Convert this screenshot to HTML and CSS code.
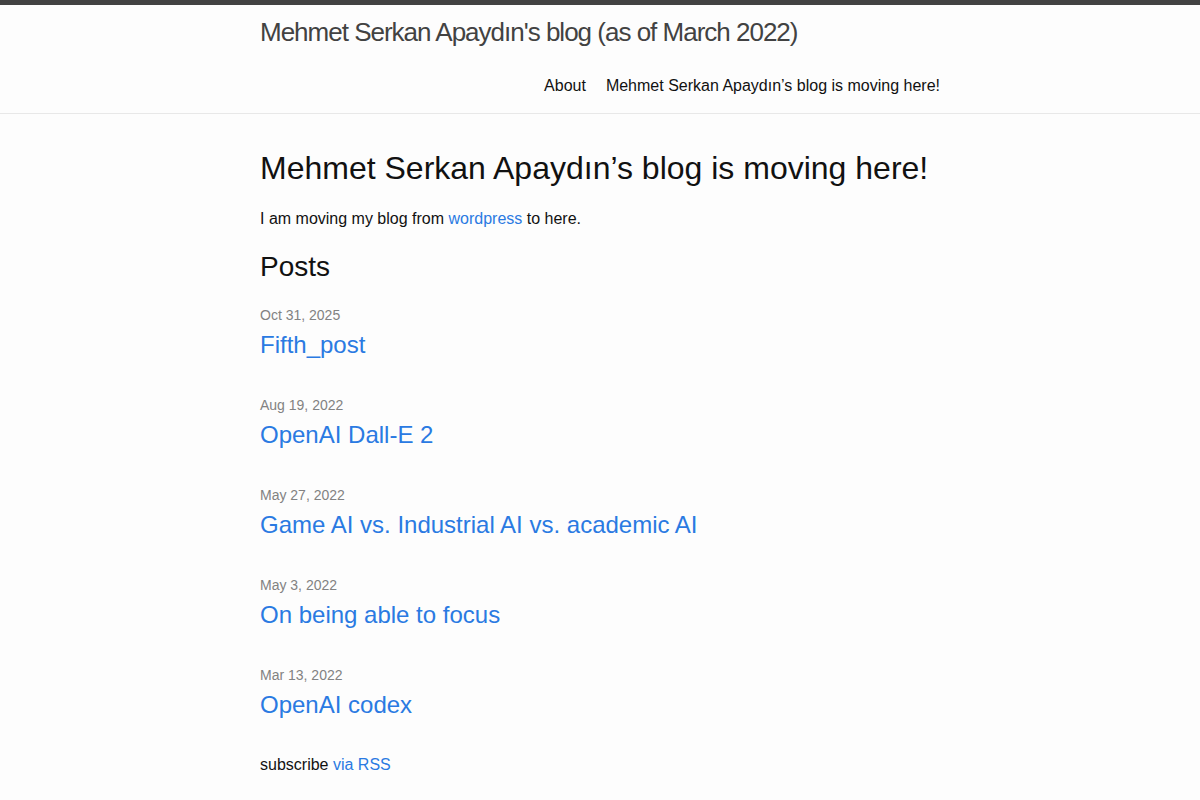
FILE: index.html
```html
<!DOCTYPE html>
<html lang="en">
<head>
  <meta charset="UTF-8">
  <meta name="viewport" content="width=device-width, initial-scale=1.0">
  <title>Mehmet Serkan Apaydın's blog (as of March 2022)</title>
  <link rel="stylesheet" href="styles.css">
</head>
<body>
  <header class="site-header">
    <div class="wrapper header-row">
      <a class="site-title" href="index.html">Mehmet Serkan Apaydın's blog (as of March 2022)</a>
      <nav class="site-nav">
        <a class="page-link" href="about.html">About</a>
        <a class="page-link" href="index.html">Mehmet Serkan Apaydın’s blog is moving here!</a>
      </nav>
    </div>
  </header>

  <main class="page-content">
    <div class="wrapper">
      <h1>Mehmet Serkan Apaydın’s blog is moving here!</h1>
      <p>I am moving my blog from <a href="#">wordpress</a> to here.</p>

      <h2 class="post-list-heading">Posts</h2>
      <ul class="post-list">
        <li>
          <span class="post-meta">Oct 31, 2025</span>
          <h3><a class="post-link" href="#">Fifth_post</a></h3>
        </li>
        <li>
          <span class="post-meta">Aug 19, 2022</span>
          <h3><a class="post-link" href="#">OpenAI Dall-E 2</a></h3>
        </li>
        <li>
          <span class="post-meta">May 27, 2022</span>
          <h3><a class="post-link" href="#">Game AI vs. Industrial AI vs. academic AI</a></h3>
        </li>
        <li>
          <span class="post-meta">May 3, 2022</span>
          <h3><a class="post-link" href="#">On being able to focus</a></h3>
        </li>
        <li>
          <span class="post-meta">Mar 13, 2022</span>
          <h3><a class="post-link" href="#">OpenAI codex</a></h3>
        </li>
      </ul>

      <p class="rss-subscribe">subscribe <a href="#">via RSS</a></p>
    </div>
  </main>
</body>
</html>
```

FILE: styles.css
```css
* {
  box-sizing: border-box;
}

body, h1, h2, h3, p, ul, li {
  margin: 0;
  padding: 0;
}

body {
  font-family: "Liberation Sans", Arial, sans-serif;
  font-size: 16px;
  line-height: 1.5;
  font-weight: 400;
  color: #111;
  background-color: #fdfdfd;
}

a {
  color: #2a7ae2;
  text-decoration: none;
}

h1, h2, h3, p, ul {
  margin-bottom: 15px;
}

h1, h2, h3 {
  font-weight: 400;
}

.wrapper {
  max-width: 740px;
  margin: 0 auto;
  padding: 0 30px;
}

/* Header */
.site-header {
  border-top: 5px solid #424242;
  border-bottom: 1px solid #e8e8e8;
  min-height: 56px;
}

.header-row {
  display: flex;
  flex-wrap: wrap;
  justify-content: space-between;
}

.site-title {
  font-size: 26px;
  font-weight: 300;
  line-height: 54px;
  letter-spacing: -1px;
  color: #424242;
}

.site-nav {
  margin-left: auto;
  line-height: 54px;
  display: flex;
  gap: 20px;
}

.page-link {
  color: #111;
}

/* Content */
.page-content {
  padding: 30px 0;
}

.page-content h1 {
  font-size: 32px;
}

.post-list-heading {
  font-size: 28px;
}

.post-list {
  list-style: none;
}

.post-list li {
  margin-bottom: 30px;
}

.post-list h3 {
  margin-bottom: 15px;
}

.post-meta {
  font-size: 14px;
  color: #828282;
}

.post-link {
  display: block;
  font-size: 24px;
}
```
